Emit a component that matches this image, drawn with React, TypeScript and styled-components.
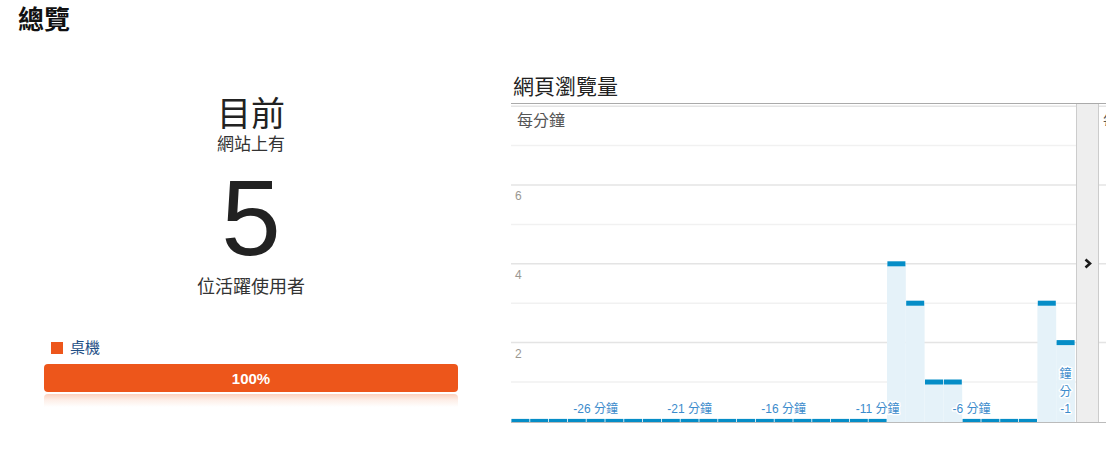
import styled, { createGlobalStyle } from "styled-components";

const GlobalStyle = createGlobalStyle`
  html, body {
    margin: 0;
    padding: 0;
    background: #fff;
    overflow: hidden;
  }
  body {
    font-family: "Liberation Sans", "Noto Sans CJK TC", sans-serif;
    color: #222;
  }
`;

const CJK = `"Liberation Sans", "Noto Sans CJK TC", sans-serif`;

const COL_W = 18.8;
const UNIT = 39.4;
const BASE = 317.4;
const PLOT_W = 565;
const PLOT_H = 318;

const values = [
  0, 0, 0, 0, 0, 0, 0, 0, 0, 0, 0, 0, 0, 0, 0, 0, 0, 0, 0, 0, 4, 3, 1, 1, 0,
  0, 0, 0, 3, 2,
];

const axisLabels = [
  { col: 4, text: "-26 分鐘" },
  { col: 9, text: "-21 分鐘" },
  { col: 14, text: "-16 分鐘" },
  { col: 19, text: "-11 分鐘" },
  { col: 24, text: "-6 分鐘" },
];

const gridLevels = [1, 2, 3, 4, 5, 6, 7, 8];

function App() {
  return (
    <Page>
      <GlobalStyle />
      <PageTitle>總覽</PageTitle>
      <Content>
        <NowPanel>
          <NowLabel>目前</NowLabel>
          <NowSub>網站上有</NowSub>
          <BigCount>5</BigCount>
          <NowSub $large>位活躍使用者</NowSub>
          <Legend>
            <Swatch />
            <LegendText>桌機</LegendText>
          </Legend>
          <ShareBar>100%</ShareBar>
          <BarReflection />
        </NowPanel>

        <ChartPanel>
          <ChartTitle>網頁瀏覽量</ChartTitle>
          <ChartBody>
            <Plot>
              <svg width={PLOT_W} height={PLOT_H}>
                {gridLevels.map((k) => (
                  <line
                    key={k}
                    x1={0}
                    x2={PLOT_W}
                    y1={BASE - UNIT * k}
                    y2={BASE - UNIT * k}
                    stroke={k % 2 === 0 ? "#e4e4e4" : "#f1f1f1"}
                    strokeWidth={1.5}
                  />
                ))}
                <UnitText x={6} y={22}>
                  每分鐘
                </UnitText>
                <AxisText x={4} y={96}>
                  6
                </AxisText>
                <AxisText x={4} y={175}>
                  4
                </AxisText>
                <AxisText x={4} y={254}>
                  2
                </AxisText>
                {values.map((v, i) =>
                  v > 0 ? (
                    <rect
                      key={"f" + i}
                      x={i * COL_W}
                      width={COL_W}
                      y={BASE - UNIT * v}
                      height={PLOT_H - (BASE - UNIT * v)}
                      fill="#e5f2f9"
                    />
                  ) : null
                )}
                {axisLabels.map((l) => (
                  <TickText
                    key={l.text}
                    x={l.col * COL_W + COL_W / 2}
                    y={309}
                    textAnchor="middle"
                  >
                    {l.text}
                  </TickText>
                ))}
                <TickText x={29.5 * COL_W} y={274} textAnchor="middle">
                  鐘
                </TickText>
                <TickText x={29.5 * COL_W} y={292} textAnchor="middle">
                  分
                </TickText>
                <TickText x={29.5 * COL_W} y={309} textAnchor="middle">
                  -1
                </TickText>
                {values.map((v, i) => (
                  <rect
                    key={"c" + i}
                    x={i * COL_W + 0.4}
                    width={COL_W - 0.8}
                    y={BASE - UNIT * v - 2.5}
                    height={5}
                    fill="#058dc7"
                  />
                ))}
              </svg>
            </Plot>
            <Pager>
              <svg width="8" height="11" viewBox="0 0 8 11">
                <polyline
                  points="1.5,1.5 6,5.5 1.5,9.5"
                  fill="none"
                  stroke="#1a1a1a"
                  strokeWidth="2.6"
                />
              </svg>
            </Pager>
            <NextPlot>
              <svg width={40} height={PLOT_H}>
                {[2, 4, 6, 8].map((k) => (
                  <line
                    key={k}
                    x1={0}
                    x2={40}
                    y1={BASE - UNIT * k}
                    y2={BASE - UNIT * k}
                    stroke="#e4e4e4"
                    strokeWidth={1.5}
                  />
                ))}
                <UnitText x={4} y={22}>
                  每分鐘
                </UnitText>
              </svg>
            </NextPlot>
          </ChartBody>
        </ChartPanel>
      </Content>
    </Page>
  );
}

const Page = styled.div`
  width: 1106px;
  height: 452px;
  overflow: hidden;
`;

const PageTitle = styled.h1`
  margin: 4px 0 0 18px;
  font-family: ${CJK};
  font-size: 26px;
  line-height: 32px;
  font-weight: 700;
  color: #111;
`;

const Content = styled.div`
  display: flex;
  margin-top: 38px;
`;

const NowPanel = styled.div`
  width: 414px;
  padding: 0 44px;
  flex-shrink: 0;
  display: flex;
  flex-direction: column;
  align-items: center;
`;

const NowLabel = styled.div`
  margin-top: 22px;
  font-size: 34px;
  line-height: 36px;
  color: #222;
`;

const NowSub = styled.div<{ $large?: boolean }>`
  margin-top: ${(p) => (p.$large ? 4 : 3)}px;
  font-size: ${(p) => (p.$large ? 18 : 17)}px;
  line-height: ${(p) => (p.$large ? 22 : 20)}px;
  color: #333;
`;

const BigCount = styled.div`
  margin-top: 10px;
  font-family: "Liberation Sans", Arial, sans-serif;
  font-size: 107px;
  line-height: 107px;
  color: #222;
`;

const Legend = styled.div`
  align-self: stretch;
  display: flex;
  align-items: center;
  gap: 7px;
  margin-top: 41px;
  padding-left: 7px;
`;

const Swatch = styled.span`
  width: 12px;
  height: 12px;
  background: #ed561b;
`;

const LegendText = styled.span`
  font-size: 15px;
  line-height: 18px;
  color: #1f4f86;
`;

const ShareBar = styled.div`
  align-self: stretch;
  margin-top: 7px;
  height: 28px;
  border-radius: 4px;
  background: #ed561b;
  color: #fff;
  font-family: "Liberation Sans", Arial, sans-serif;
  font-weight: 700;
  font-size: 15px;
  display: flex;
  align-items: center;
  justify-content: center;
`;

const BarReflection = styled.div`
  align-self: stretch;
  margin-top: 2px;
  height: 13px;
  border-radius: 4px 4px 0 0;
  background: linear-gradient(to bottom, #fbd2c0 0%, #fdeee7 45%, #fff 100%);
`;

const ChartPanel = styled.div`
  flex: 1;
  min-width: 0;
  margin-left: 9px;
  overflow: hidden;
`;

const ChartTitle = styled.div`
  padding: 0 0 3px 2px;
  font-size: 21px;
  line-height: 26px;
  color: #222;
  border-bottom: 1px solid #aaa;
  white-space: nowrap;
`;

const ChartBody = styled.div`
  display: flex;
  height: ${PLOT_H}px;
  border-bottom: 1px solid #bbb;
`;

const Plot = styled.div`
  width: ${PLOT_W}px;
  flex-shrink: 0;

  svg {
    display: block;
  }
`;

const Pager = styled.div`
  width: 21px;
  flex-shrink: 0;
  background: #eee;
  border-left: 1px solid #ccc;
  border-right: 1px solid #ccc;
  display: flex;
  align-items: center;
  justify-content: center;
`;

const NextPlot = styled.div`
  flex: 1;
  overflow: hidden;

  svg {
    display: block;
  }
`;

const UnitText = styled.text`
  font-family: ${CJK};
  font-size: 16px;
  fill: #555;
`;

const AxisText = styled.text`
  font-family: "Liberation Sans", Arial, sans-serif;
  font-size: 12px;
  fill: #9a9791;
`;

const TickText = styled.text`
  font-family: ${CJK};
  font-size: 12px;
  fill: #3b8bcc;
  stroke: #fff;
  stroke-width: 3px;
  paint-order: stroke;
  stroke-linejoin: round;
`;

export default App;
